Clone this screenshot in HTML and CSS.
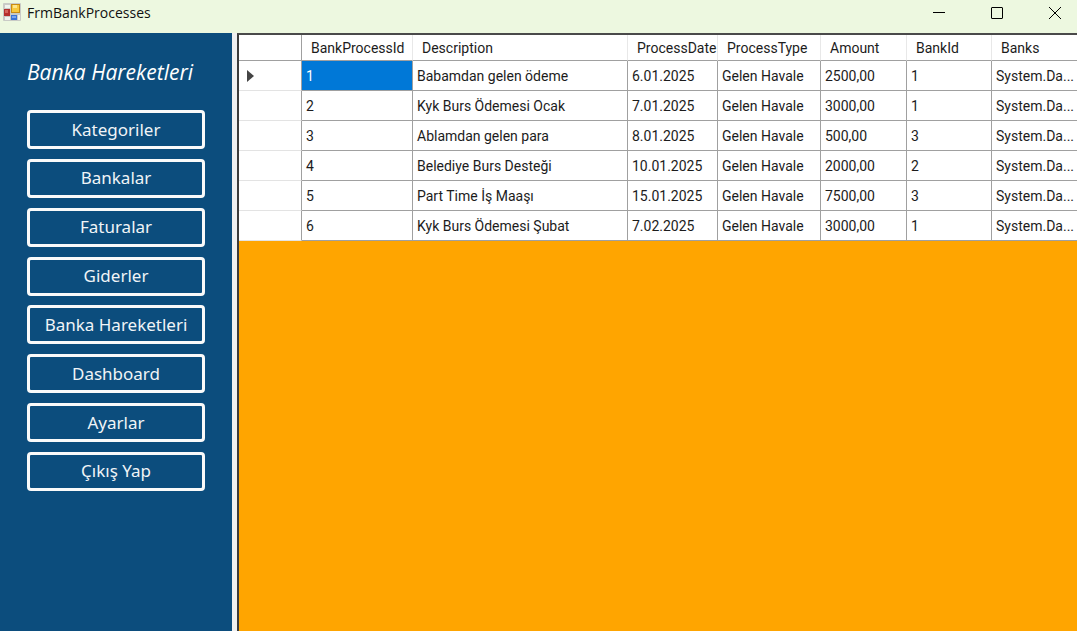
FILE: index.html
```html
<!DOCTYPE html>
<html lang="tr">
<head>
<meta charset="utf-8">
<title>FrmBankProcesses</title>
<link rel="stylesheet" href="styles.css">
</head>
<body>
<header class="titlebar">
  <svg class="app-icon" width="18" height="18" viewBox="0 0 18 18" aria-hidden="true">
    <rect width="18" height="18" rx="1" fill="#c9cbc6"/>
    <rect x="2" y="2" width="5" height="3" fill="#f1f3ee"/>
    <rect x="1" y="6" width="6" height="7" fill="#b5302d"/>
    <rect x="2" y="7" width="3" height="3" fill="#d4655c"/>
    <rect x="8" y="1" width="9" height="9" fill="#c98c12"/>
    <rect x="9" y="2" width="7" height="7" fill="#f7c93c"/>
    <rect x="10" y="2" width="4" height="3" fill="#fde68b"/>
    <rect x="8" y="12" width="6" height="5" fill="#3b74d6"/>
    <rect x="9" y="13" width="4" height="2" fill="#7aa6ef"/>
    <rect x="2" y="14" width="5" height="3" fill="#f1f3ee"/>
    <rect x="15" y="12" width="2" height="5" fill="#f1f3ee"/>
  </svg>
  <h1 class="window-title">FrmBankProcesses</h1>
  <div class="window-controls">
    <button type="button" class="control" aria-label="Simge durumuna küçült"><svg width="12" height="12" viewBox="0 0 12 12"><path d="M0 5.500H12"/></svg></button>
    <button type="button" class="control" aria-label="Ekranı kapla"><svg width="12" height="12" viewBox="0 0 12 12"><rect x=".5" y=".5" width="11" height="11" rx=".5"/></svg></button>
    <button type="button" class="control" aria-label="Kapat"><svg width="12" height="12" viewBox="0 0 12 12"><path d="M0 0L12 12M12 0L0 12"/></svg></button>
  </div>
</header>
<main class="window-body">
  <nav class="sidebar">
    <h2 class="sidebar-title">Banka Hareketleri</h2>
    <div class="menu">
      <button type="button" class="menu-button">Kategoriler</button>
      <button type="button" class="menu-button">Bankalar</button>
      <button type="button" class="menu-button">Faturalar</button>
      <button type="button" class="menu-button">Giderler</button>
      <button type="button" class="menu-button">Banka Hareketleri</button>
      <button type="button" class="menu-button">Dashboard</button>
      <button type="button" class="menu-button">Ayarlar</button>
      <button type="button" class="menu-button">Çıkış Yap</button>
    </div>
  </nav>
  <section class="grid-panel">
    <table class="grid">
      <colgroup>
        <col class="col-marker"><col class="col-id"><col class="col-description"><col class="col-date"><col class="col-type"><col class="col-amount"><col class="col-bank"><col class="col-banks">
      </colgroup>
      <thead>
        <tr><th></th><th>BankProcessId</th><th>Description</th><th>ProcessDate</th><th>ProcessType</th><th>Amount</th><th>BankId</th><th>Banks</th></tr>
      </thead>
      <tbody>
        <tr><td class="marker"><svg width="7" height="12" viewBox="0 0 7 12" aria-hidden="true"><path d="M0 0L7 6L0 12Z" fill="#444"/></svg></td><td class="selected">1</td><td>Babamdan gelen ödeme</td><td>6.01.2025</td><td>Gelen Havale</td><td>2500,00</td><td>1</td><td>System.Da...</td></tr>
        <tr><td class="marker"></td><td>2</td><td>Kyk Burs Ödemesi Ocak</td><td>7.01.2025</td><td>Gelen Havale</td><td>3000,00</td><td>1</td><td>System.Da...</td></tr>
        <tr><td class="marker"></td><td>3</td><td>Ablamdan gelen para</td><td>8.01.2025</td><td>Gelen Havale</td><td>500,00</td><td>3</td><td>System.Da...</td></tr>
        <tr><td class="marker"></td><td>4</td><td>Belediye Burs Desteği</td><td>10.01.2025</td><td>Gelen Havale</td><td>2000,00</td><td>2</td><td>System.Da...</td></tr>
        <tr><td class="marker"></td><td>5</td><td>Part Time İş Maaşı</td><td>15.01.2025</td><td>Gelen Havale</td><td>7500,00</td><td>3</td><td>System.Da...</td></tr>
        <tr><td class="marker"></td><td>6</td><td>Kyk Burs Ödemesi Şubat</td><td>7.02.2025</td><td>Gelen Havale</td><td>3000,00</td><td>1</td><td>System.Da...</td></tr>
      </tbody>
    </table>
  </section>
</main>
</body>
</html>
```
FILE: styles.css
```css
* { box-sizing: border-box; }

body {
  margin: 0;
  min-height: 100vh;
  display: flex;
  flex-direction: column;
  background: #f0f0f0;
  font-family: "Open Sans", "Noto Sans", sans-serif;
}

.titlebar {
  display: flex;
  align-items: flex-start;
  height: 33px;
  padding: 3px 16px 0 3px;
  background: #edf8e0;
}

.app-icon { flex: none; }

.window-title {
  margin: 0 auto 0 6px;
  font-size: 14px;
  line-height: 20px;
  font-weight: 400;
  color: #111;
}

.window-controls {
  display: flex;
  gap: 46px;
}

.control {
  display: flex;
  padding: 4px 0;
  border: 0;
  background: none;
}

.control svg {
  fill: none;
  stroke: #000;
  stroke-width: 1;
}

.window-body {
  flex: 1;
  display: flex;
  gap: 5px;
}

.sidebar {
  flex: none;
  width: 232px;
  padding: 26px 27px 0;
  background: #0c4d7d;
}

.sidebar-title {
  margin: 0 0 25px;
  font-size: 21px;
  line-height: 26px;
  font-style: italic;
  font-weight: 400;
  color: #fff;
  white-space: nowrap;
}

.menu {
  display: flex;
  flex-direction: column;
  justify-content: space-between;
  min-height: 381px;
}

.menu-button {
  height: 39px;
  padding: 0;
  border: 3px solid #fafafa;
  border-radius: 4px;
  background: transparent;
  font-family: "Noto Sans", sans-serif;
  font-size: 17px;
  line-height: 24px;
  color: #f0f4f7;
}

.grid-panel {
  flex: 1;
  min-width: 0;
  overflow: hidden;
  border-top: 2px solid #4a4a4a;
  border-left: 2px solid #3c3c3c;
  background: #ffa500;
}

.grid {
  width: 860px;
  min-width: 100%;
  table-layout: fixed;
  border-collapse: separate;
  border-spacing: 0;
  background: #fff;
  font-family: Roboto, sans-serif;
  font-size: 14px;
  line-height: 20px;
  color: #1c1c1c;
}

.col-marker { width: 63px; }
.col-id { width: 111px; }
.col-description { width: 215px; }
.col-date { width: 90px; }
.col-type { width: 103px; }
.col-amount { width: 86px; }
.col-bank { width: 85px; }

.grid th {
  height: 26px;
  padding: 0 0 0 9px;
  border-right: 1px solid #e8e8e8;
  border-bottom: 1px solid #a0a0a0;
  font-weight: 400;
  text-align: left;
  white-space: nowrap;
}

.grid td {
  height: 30px;
  padding: 0 0 0 4px;
  border-right: 1px solid #a0a0a0;
  border-bottom: 1px solid #a0a0a0;
  white-space: nowrap;
}

.grid th:first-child { border-right-color: #a0a0a0; }

.grid .marker {
  padding-left: 8px;
  border-bottom-color: #e3e3e3;
}

.marker svg { display: block; }

.grid .selected {
  background: #0078d7;
  color: #fff;
}
```
